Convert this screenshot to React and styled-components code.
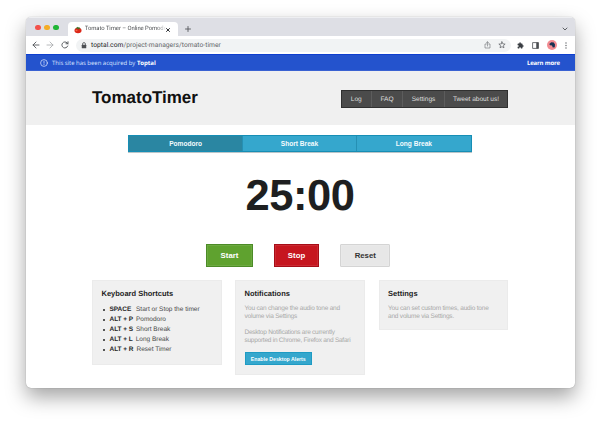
import React from 'react';
import styled, { createGlobalStyle } from 'styled-components';

const GlobalStyle = createGlobalStyle`
  * { box-sizing: border-box; }
  body { margin: 0; background: #fff; overflow: hidden; font-family: "Liberation Sans", Arial, sans-serif; text-rendering: geometricPrecision; }
  button { font-family: inherit; margin: 0; padding: 0; }
  h1, h2, p, ul { margin: 0; padding: 0; }
  svg { display: block; flex: none; }
`;

const Desktop = styled.div`
  height: 422px;
  padding: 17px 25.5px 0;
  overflow: hidden;
`;

const Window = styled.main`
  height: 371px;
  border-radius: 5px;
  overflow: hidden;
  background: #fff;
  box-shadow: 0 0 1px rgba(0, 0, 0, 0.4), 0 9px 20px rgba(0, 0, 0, 0.36);
`;

const TabStrip = styled.div`
  display: flex;
  height: 19px;
  padding: 4px 7px 0 9.5px;
  background: #dedfe5;
  border-top: 1px solid #eeeff2;
`;

const Lights = styled.div`
  display: flex;
  gap: 3.5px;
  width: 33px;
  padding-top: 2.5px;
`;

const Light = styled.i`
  width: 5.6px;
  height: 5.6px;
  border-radius: 50%;
  background: ${(p) => p.$color};
`;

const BrowserTab = styled.div`
  display: flex;
  align-items: center;
  width: 110px;
  height: 15px;
  padding: 0 5px 0 5.5px;
  background: #fff;
  border-radius: 4px 4px 0 0;
`;

const TabTitle = styled.span`
  width: 81.5px;
  margin-left: 3.3px;
  white-space: nowrap;
  font: 5.9px/9px Roboto, sans-serif;
  letter-spacing: -0.06px;
  color: #4b4d50;
  mask-image: linear-gradient(90deg, #000 88%, transparent 101%);
`;

const StripIcon = styled.div`
  padding-top: ${(p) => p.$top}px;
  margin-left: ${(p) => p.$left};
`;

const Toolbar = styled.div`
  display: flex;
  align-items: center;
  height: 18px;
  padding: 0 7.5px 0 6px;
  background: #fff;
`;

const Navigation = styled.div`
  display: flex;
  gap: 6.5px;
  width: 44px;
`;

const AddressBar = styled.div`
  display: flex;
  align-items: center;
  width: 435px;
  height: 13px;
  padding: 0 5px 0 5px;
  border-radius: 7px;
  background: #f1f3f4;
  font: 6.7px/12px Roboto, sans-serif;
  color: #63666a;
`;

const Url = styled.span`
  flex: 1;
  margin-left: 4.5px;
  letter-spacing: 0.03px;
  b { font-weight: 400; color: #202124; }
`;

const PageActions = styled.div`
  display: flex;
  align-items: center;
  gap: 7px;
`;

const Extensions = styled.div`
  display: flex;
  flex: 1;
  align-items: center;
  justify-content: space-between;
  padding-left: 6.5px;
`;

const Banner = styled.div`
  display: flex;
  align-items: center;
  justify-content: space-between;
  height: 16.5px;
  padding: 1px 14.5px 0 14px;
  background: #2453cd;
  border-top: 1px solid #0f3fcf;
  border-bottom: 1px solid #3a62d2;
  color: #fff;
  font: 6px/10px "Open Sans", sans-serif;
`;

const Notice = styled.div`
  display: flex;
  align-items: center;
  gap: 4.5px;
  letter-spacing: -0.03px;
  color: #dbe5ff;
  b { color: #fff; }
`;

const LearnMore = styled.b`
  letter-spacing: -0.16px;
`;

const Header = styled.header`
  display: flex;
  justify-content: space-between;
  height: 54.5px;
  padding: 19px 66.5px 0;
  background: #f0f0f0;
`;

const Title = styled.h1`
  margin-top: -1px;
  font-size: 17px;
  line-height: 17px;
  letter-spacing: -0.02px;
  color: #111;
`;

const SiteNav = styled.nav`
  display: grid;
  grid-template-columns: 29.5px 31px 42px 1fr;
  width: 167.5px;
  height: 18.5px;
  background: #4b4b4b;
  border: 1px solid #303030;
`;

const NavItem = styled.a`
  text-align: center;
  font-size: 6.6px;
  line-height: 17.5px;
  height: 16.5px;
  letter-spacing: -0.03px;
  color: #dedede;
  border-left: ${(p) => (p.$first ? '0' : '1px solid #5c5c5c')};
`;

const Content = styled.section`
  display: flex;
  flex-direction: column;
  align-items: center;
  padding: 10px 66.5px 0;
`;

const ModeTabs = styled.div`
  display: grid;
  grid-template-columns: 1fr 1fr 1fr;
  width: 343.5px;
  height: 17px;
  border: 1px solid #168eb5;
  box-shadow: 0 0.5px 0.5px #b9c4c8;
`;

const Mode = styled.button`
  border: 0;
  border-right: ${(p) => (p.$last ? '0' : '1px solid #2590b4')};
  background: ${(p) => (p.$active ? '#2a86a2' : '#35a7cd')};
  color: #f4fbfd;
  font-size: 6.6px;
  line-height: 15px;
  font-weight: 700;
`;

const Clock = styled.div`
  margin-top: 23px;
  font-size: 43.5px;
  line-height: 43px;
  font-weight: 700;
  letter-spacing: -0.5px;
  color: #1e1f20;
`;

const Controls = styled.div`
  display: flex;
  gap: 21px;
  margin: 26px 0 12.5px;
  padding-right: 3.5px;
`;

const ControlButton = styled.button`
  width: ${(p) => p.$width}px;
  height: 23px;
  border: 1px solid ${(p) => p.$edge};
  border-radius: ${(p) => (p.$round ? 1 : 0)}px;
  background: ${(p) => p.$fill};
  color: ${(p) => p.$ink};
  font-size: 7.8px;
  line-height: 21px;
  font-weight: 700;
  box-shadow: inset 0 0 0 0.7px rgba(255, 255, 255, 0.12);
`;

const Cards = styled.div`
  display: grid;
  grid-template-columns: 129.5px 130px 129.5px;
  justify-content: space-between;
  align-items: start;
  width: 416px;
`;

const Card = styled.article`
  height: ${(p) => p.$height}px;
  padding: 8.5px 0 0 8.5px;
  background: #f0f0f0;
  border: 1px solid #ebebeb;
`;

const CardTitle = styled.h2`
  font-size: 7.5px;
  line-height: 10px;
  color: #1d1d1d;
`;

const Shortcuts = styled.ul`
  margin-top: 5.7px;
  list-style: none;
`;

const Shortcut = styled.li`
  display: flex;
  align-items: center;
  height: 10.15px;
  font-size: 6.5px;
  line-height: 10px;
  white-space: nowrap;
  color: #484848;
  &::before {
    content: "";
    width: 2px;
    height: 2px;
    margin: 0 5px 0 1px;
    border-radius: 50%;
    background: #222;
  }
  b { width: ${(p) => p.$keyWidth}px; color: #272727; letter-spacing: -0.05px; }
`;

const Copy = styled.p`
  margin-top: ${(p) => p.$top}px;
  font-size: 6.5px;
  line-height: 8.15px;
  letter-spacing: ${(p) => p.$tracking}px;
  white-space: nowrap;
  color: #a8a8a8;
`;

const AlertsButton = styled.button`
  display: block;
  width: 67.5px;
  height: 13px;
  margin-top: 6.5px;
  padding-top: 1px;
  border: 1px solid #1e9bc3;
  background: #35a7cd;
  color: #fff;
  font-size: 5.2px;
  line-height: 10px;
  font-weight: 700;
  white-space: nowrap;
`;

const Stroke = ({ w, h, box, width = 1, color = '#55585c', children }) => (
  <svg width={w} height={h} viewBox={box} fill="none" stroke={color} strokeWidth={width} strokeLinecap="round" strokeLinejoin="round">
    {children}
  </svg>
);

const Tomato = () => (
  <svg width="8" height="8" viewBox="0 0 16 16">
    <ellipse cx="8" cy="9" rx="7" ry="5.6" fill="#dc2718" />
    <ellipse cx="5" cy="9" rx="2" ry="1.4" fill="#f26b4d" />
    <path d="M8 5.500L2.500 4.500l3-1.300L7 1.500l1 1.300L12 2l-1.500 1.600L13.500 5l-4 .5L8 8z" fill="#397023" />
  </svg>
);

const shortcuts = [
  ['SPACE', 'Start or Stop the timer', 26.5],
  ['ALT + P', 'Pomodoro', 26.5],
  ['ALT + S', 'Short Break', 26.5],
  ['ALT + L', 'Long Break', 26.2],
  ['ALT + R', 'Reset Timer', 27],
];

export default function App() {
  return (
    <Desktop>
      <GlobalStyle />
      <Window>
        <TabStrip>
          <Lights>
            <Light $color="#f3524c" />
            <Light $color="#f4ad27" />
            <Light $color="#1fb535" />
          </Lights>
          <BrowserTab>
            <Tomato />
            <TabTitle>Tomato Timer – Online Pomodo</TabTitle>
            <Stroke w="4" h="4" box="0 0 8 8" width={1.9} color="#25272a">
              <path d="M1 1l6 6M7 1L1 7" />
            </Stroke>
          </BrowserTab>
          <StripIcon $top={4} $left="7px">
            <Stroke w="6" h="6" box="0 0 12 12" width={1.8}><path d="M6 1v10M1 6h10" /></Stroke>
          </StripIcon>
          <StripIcon $top={4.5} $left="auto">
            <Stroke w="6" h="4" box="0 0 12 8" width={1.9}><path d="M2 2l4 4 4-4" /></Stroke>
          </StripIcon>
        </TabStrip>

        <Toolbar>
          <Navigation>
            <Stroke w="8" h="8" box="0 0 16 16" width={1.8}><path d="M14 8H2M8 2L2 8l6 6" /></Stroke>
            <Stroke w="8" h="8" box="0 0 16 16" width={1.6} color="#a6a8ab"><path d="M2 8h12M8 2l6 6-6 6" /></Stroke>
            <Stroke w="8" h="8" box="0 0 16 16" width={1.9}><path d="M13.5 10a6 6 0 1 1-1.3-6.2L14 5.5M14 1.5v4h-4" /></Stroke>
          </Navigation>
          <AddressBar>
            <svg width="6" height="7" viewBox="0 0 12 14">
              <path d="M3.2 6V4a2.8 2.8 0 0 1 5.6 0v2" fill="none" stroke="#4c4f53" strokeWidth="1.6" />
              <rect x="1.5" y="5.5" width="9" height="7" rx="1" fill="#4c4f53" />
            </svg>
            <Url><b>toptal.com</b>/project-managers/tomato-timer</Url>
            <PageActions>
              <Stroke w="7" h="8" box="0 0 14 16" width={1.2} color="#6b6e72">
                <path d="M4.5 6H2v8h10V6H9.500M7 10V2M4.500 4L7 1.500 9.500 4" />
              </Stroke>
              <Stroke w="8" h="8" box="0 0 16 16" width={1.4}>
                <path d="M8 1.700l1.800 4.100 4.500.4-3.400 3 1 4.400L8 11.300l-3.900 2.300 1-4.400-3.400-3 4.500-.4z" />
              </Stroke>
            </PageActions>
          </AddressBar>
          <Extensions>
            <svg width="7" height="7" viewBox="0 0 24 24" fill="#393d42">
              <path d="M20.500 11H19V7a2 2 0 0 0-2-2h-4V3.500a2.500 2.500 0 0 0-5 0V5H4a2 2 0 0 0-2 2v3.800h1.500a2.700 2.700 0 0 1 0 5.400H2V20a2 2 0 0 0 2 2h3.800v-1.500a2.700 2.700 0 0 1 5.400 0V22H17a2 2 0 0 0 2-2v-4h1.500a2.500 2.500 0 0 0 0-5z" />
            </svg>
            <svg width="7" height="7" viewBox="0 0 14 14">
              <path d="M1.200 1.200h11.600v11.600H1.200z" fill="none" stroke="#4a4d51" strokeWidth="1.600" />
              <path d="M8.500 1h4.500v12H8.500z" fill="#4a4d51" />
            </svg>
            <svg width="10" height="10" viewBox="0 0 20 20">
              <circle cx="10" cy="10" r="10" fill="#f28b91" />
              <path d="M4.500 8l4-3.500 5 .5 2.500 4-.5 5.500-4 .5-1.500-4-4-.5z" fill="#183253" />
            </svg>
            <svg width="2" height="7" viewBox="0 0 4 14" fill="#585b5f">
              <circle cx="2" cy="2" r="1.300" /><circle cx="2" cy="7" r="1.300" /><circle cx="2" cy="12" r="1.300" />
            </svg>
          </Extensions>
        </Toolbar>

        <Banner>
          <Notice>
            <Stroke w="8" h="8" box="0 0 16 16" width={1.4} color="#e4ebff">
              <circle cx="8" cy="8" r="6.800" /><path d="M8 4.500v4M8 11v.4" />
            </Stroke>
            <span>This site has been acquired by <b>Toptal</b></span>
          </Notice>
          <LearnMore>Learn more</LearnMore>
        </Banner>

        <Header>
          <Title>TomatoTimer</Title>
          <SiteNav>
            <NavItem $first>Log</NavItem>
            <NavItem>FAQ</NavItem>
            <NavItem>Settings</NavItem>
            <NavItem>Tweet about us!</NavItem>
          </SiteNav>
        </Header>

        <Content>
          <ModeTabs>
            <Mode $active>Pomodoro</Mode>
            <Mode>Short Break</Mode>
            <Mode $last>Long Break</Mode>
          </ModeTabs>
          <Clock>25:00</Clock>
          <Controls>
            <ControlButton $width={46.5} $fill="#5fa22f" $edge="#4c8b27" $ink="#fff">Start</ControlButton>
            <ControlButton $width={45.5} $fill="#c6161f" $edge="#a60d17" $ink="#fff">Stop</ControlButton>
            <ControlButton $width={50} $fill="#e7e7e7" $edge="#d4d4d4" $ink="#333" $round>Reset</ControlButton>
          </Controls>
          <Cards>
            <Card $height={85}>
              <CardTitle>Keyboard Shortcuts</CardTitle>
              <Shortcuts>
                {shortcuts.map(([key, label, width]) => (
                  <Shortcut key={key} $keyWidth={width}><b>{key}</b>{label}</Shortcut>
                ))}
              </Shortcuts>
            </Card>
            <Card $height={95.5}>
              <CardTitle>Notifications</CardTitle>
              <Copy $top={6} $tracking={-0.2}>You can change the audio tone and<br />volume via Settings</Copy>
              <Copy $top={8} $tracking={-0.25}>Desktop Notifications are currently<br />supported in Chrome, Firefox and Safari</Copy>
              <AlertsButton>Enable Desktop Alerts</AlertsButton>
            </Card>
            <Card $height={50.5}>
              <CardTitle>Settings</CardTitle>
              <Copy $top={6} $tracking={-0.2}>You can set custom times, audio tone<br />and volume via Settings.</Copy>
            </Card>
          </Cards>
        </Content>
      </Window>
    </Desktop>
  );
}
